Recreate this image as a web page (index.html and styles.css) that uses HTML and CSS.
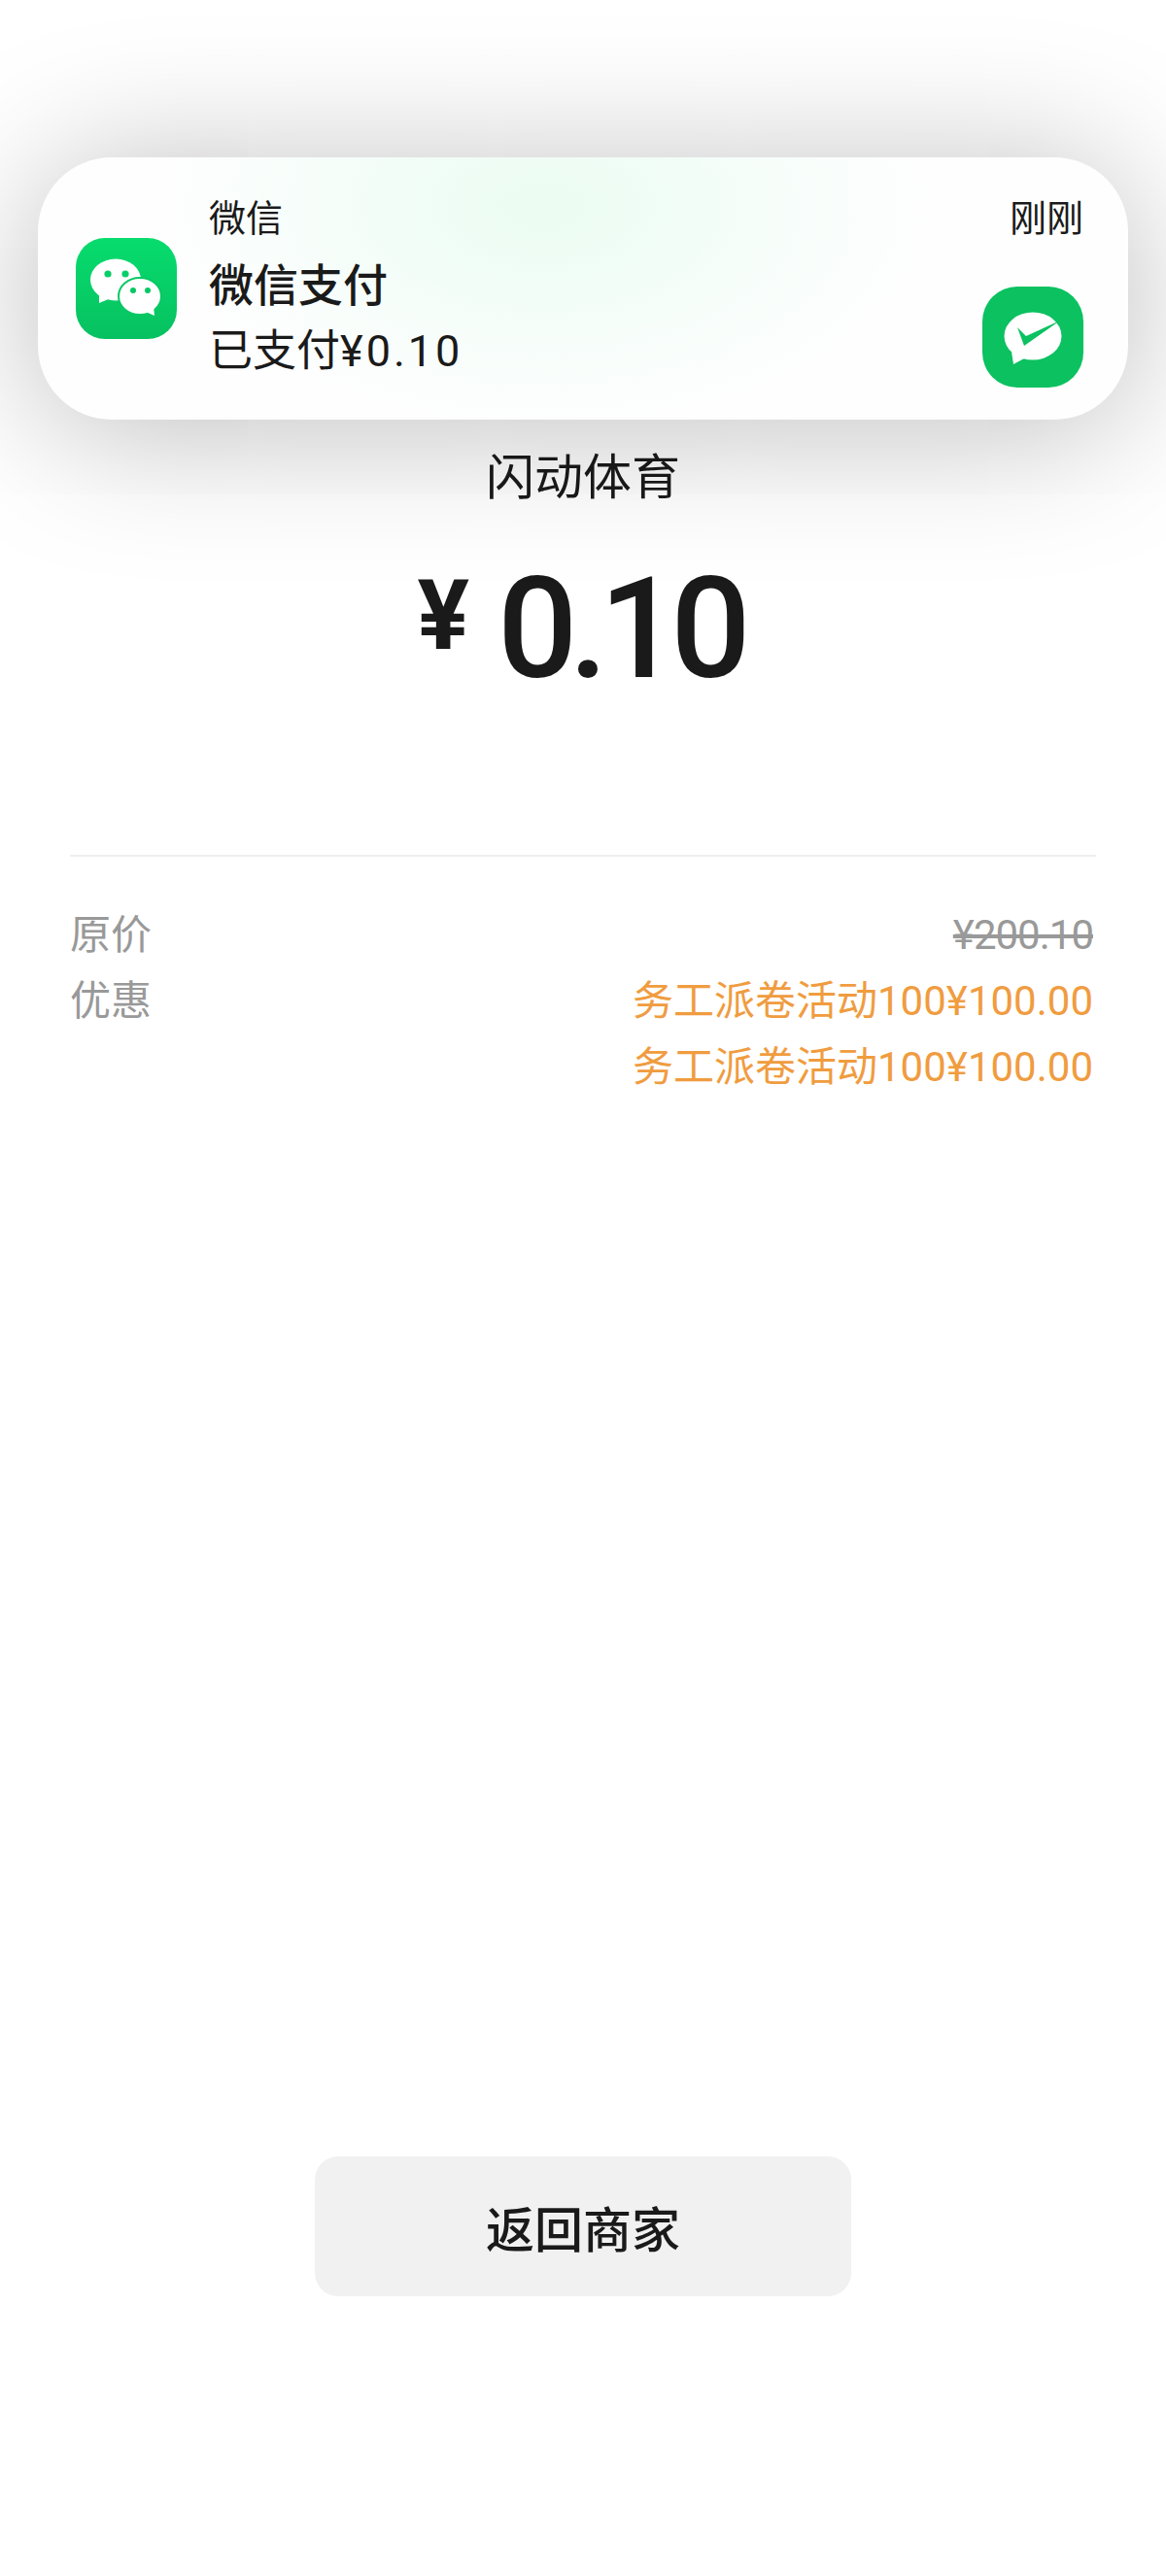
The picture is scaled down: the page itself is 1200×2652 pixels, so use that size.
FILE: index.html
```html
<!DOCTYPE html>
<html lang="zh-CN">
<head>
    <meta charset="UTF-8">
    <meta name="viewport" content="width=device-width, initial-scale=1.0">
    <title>支付结果</title>
    <link rel="stylesheet" href="styles.css">
</head>
<body>
    <!-- Notification banner, sits over the page -->
    <div class="notice">
        <svg class="notice-icon" viewBox="0 0 104 104">
            <defs>
                <linearGradient id="wxGreen" x1="0" y1="0" x2="0" y2="1">
                    <stop offset="0" stop-color="#07dc6e"/>
                    <stop offset="1" stop-color="#07c160"/>
                </linearGradient>
            </defs>
            <rect width="104" height="104" rx="30" fill="url(#wxGreen)"/>
            <ellipse cx="41" cy="43" rx="26" ry="21.5" fill="#fff"/>
            <path d="M24 59 L24 67 L36 62 Z" fill="#fff"/>
            <circle cx="33" cy="37" r="3.6" fill="#07cf68"/>
            <circle cx="51" cy="37" r="3.6" fill="#07cf68"/>
            <ellipse cx="66" cy="60" rx="22" ry="19" fill="#fff" stroke="#07c864" stroke-width="2"/>
            <path d="M72 76 L81 80 L80 70 Z" fill="#fff"/>
            <circle cx="59" cy="54" r="3" fill="#07c864"/>
            <circle cx="74" cy="54" r="3" fill="#07c864"/>
        </svg>
        <div class="notice-text">
            <div class="notice-app">微信</div>
            <div class="notice-title">微信支付</div>
            <div class="notice-body">已支付<span class="notice-num">¥0.10</span></div>
        </div>
        <div class="notice-side">
            <div class="notice-time">刚刚</div>
            <svg class="notice-pay" viewBox="0 0 104 104">
                <rect width="104" height="104" rx="36" fill="#0bc160"/>
                <ellipse cx="52" cy="51" rx="29.5" ry="24.5" fill="#fff"/>
                <path d="M30 67 L32 80 L45 73 Z" fill="#fff"/>
                <path d="M36 42 L45 51 L80 35 L43 61 Z" fill="#0bc160"/>
            </svg>
        </div>
    </div>

    <div class="page">
        <div class="merchant">闪动体育</div>
        <div class="amount"><span class="currency">¥</span>0.10</div>

        <div class="details">
            <div class="row">
                <div class="row-label">原价</div>
                <div class="row-value price-old">¥200.10</div>
            </div>
            <div class="row">
                <div class="row-label">优惠</div>
                <div class="row-value discounts">
                    <div>务工派卷活动100¥100.00</div>
                    <div>务工派卷活动100¥100.00</div>
                </div>
            </div>
        </div>

        <div class="back-btn">返回商家</div>
    </div>
</body>
</html>
```

FILE: styles.css
```css
/* General Page Styles */
body {
    margin: 0;
    height: 2652px;
    overflow: hidden;
    background: #fff;
    color: #1a1a1a;
    font-family: Roboto, 'Noto Sans CJK SC', sans-serif;
}

.page {
    display: flex;
    flex-direction: column;
    align-items: center;
    padding-top: 457px;
}

/* Notification */
.notice {
    position: absolute;
    left: 39px;
    top: 162px;
    width: 1122px;
    height: 270px;
    box-sizing: border-box;
    display: flex;
    padding: 38px 46px 33px 39px;
    border-radius: 76px;
    background:
        radial-gradient(ellipse 400px 230px at 520px 50px, #ebfcf2 0%, rgba(241, 253, 247, 0.75) 50%, rgba(255, 255, 255, 0) 100%),
        #fefefe;
    box-shadow: 0 10px 150px rgba(0, 0, 0, 0.27);
}

.notice-icon {
    width: 104px;
    height: 104px;
    margin-top: 45px;
    flex-shrink: 0;
}

.notice-text {
    margin-left: 33px;
    flex: 1;
}

.notice-app {
    font-size: 38px;
    line-height: 50px;
}

.notice-title {
    margin-top: 12px;
    font-size: 46px;
    line-height: 64px;
    font-weight: 500;
}

.notice-body {
    margin-top: 6px;
    font-size: 45px;
    line-height: 60px;
}

.notice-num {
    letter-spacing: 3px;
}

.notice-side {
    display: flex;
    flex-direction: column;
    justify-content: space-between;
    align-items: flex-end;
}

.notice-time {
    font-size: 38px;
    line-height: 50px;
}

.notice-pay {
    width: 104px;
    height: 104px;
}

/* Amount */
.merchant {
    font-size: 50px;
    line-height: 70px;
}

.amount {
    margin-top: 35px;
    margin-right: 7px;
    display: flex;
    align-items: baseline;
    font-size: 145px;
    line-height: 170px;
    font-weight: 500;
    letter-spacing: -9px;
}

.currency {
    margin-right: 38px;
    font-size: 100px;
    font-weight: 700;
    position: relative;
    top: -29px;
}

/* Price rows */
.details {
    width: 1056px;
    margin-top: 132px;
    padding-top: 47px;
    border-top: 2px solid #eee;
    box-sizing: border-box;
}

.row {
    display: flex;
    justify-content: space-between;
    font-size: 42px;
    line-height: 68px;
    padding-right: 3px;
}

.row-label {
    color: #999;
}

.row-value {
    text-align: right;
}

.price-old {
    color: #999;
    letter-spacing: -1px;
    text-decoration: line-through;
}

.discounts {
    color: #f09c3f;
}

/* Button */
.back-btn {
    width: 552px;
    height: 144px;
    margin-top: 1087px;
    display: flex;
    align-items: center;
    justify-content: center;
    background: #f1f1f1;
    border-radius: 24px;
    font-size: 50px;
    font-weight: 500;
}
```
